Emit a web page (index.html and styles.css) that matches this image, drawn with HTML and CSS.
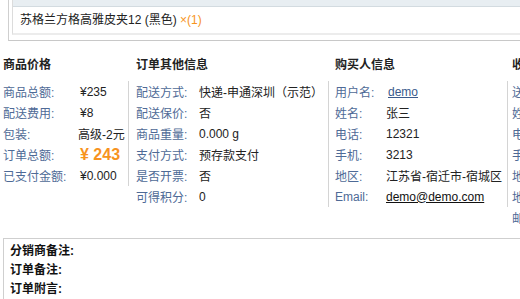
FILE: index.html
```html
<!DOCTYPE html>
<html lang="zh">
<head>
<meta charset="utf-8">
<title>订单详情</title>
<link rel="stylesheet" href="styles.css">
</head>
<body>
<div class="page">
  <div class="goods-box">
    <div class="goods-inner">
      <div class="goods-head"></div>
      <div class="goods-row">苏格兰方格高雅皮夹12 (黑色) <span class="qty">×(1)</span></div>
    </div>
  </div>

  <div class="info">
    <div class="col col-1">
      <h3 class="col-title">商品价格</h3>
      <div class="col-body">
        <div class="row"><span class="lbl">商品总额:</span><span class="val">¥235</span></div>
        <div class="row"><span class="lbl">配送费用:</span><span class="val">¥8</span></div>
        <div class="row"><span class="lbl">包装:</span><span class="val pack">高级-2元</span></div>
        <div class="row"><span class="lbl">订单总额:</span><span class="val total">¥ 243</span></div>
        <div class="row"><span class="lbl">已支付金额:</span><span class="val">¥0.000</span></div>
      </div>
    </div>
    <div class="col col-2">
      <h3 class="col-title">订单其他信息</h3>
      <div class="col-body">
        <div class="row"><span class="lbl">配送方式:</span><span class="val">快递-申通深圳（示范）</span></div>
        <div class="row"><span class="lbl">配送保价:</span><span class="val">否</span></div>
        <div class="row"><span class="lbl">商品重量:</span><span class="val">0.000 g</span></div>
        <div class="row"><span class="lbl">支付方式:</span><span class="val">预存款支付</span></div>
        <div class="row"><span class="lbl">是否开票:</span><span class="val">否</span></div>
        <div class="row"><span class="lbl">可得积分:</span><span class="val">0</span></div>
      </div>
    </div>
    <div class="col col-3">
      <h3 class="col-title">购买人信息</h3>
      <div class="col-body">
        <div class="row"><span class="lbl">用户名:</span><span class="val"><a class="user-link" href="#">demo</a></span></div>
        <div class="row"><span class="lbl">姓名:</span><span class="val">张三</span></div>
        <div class="row"><span class="lbl">电话:</span><span class="val">12321</span></div>
        <div class="row"><span class="lbl">手机:</span><span class="val">3213</span></div>
        <div class="row"><span class="lbl">地区:</span><span class="val">江苏省-宿迁市-宿城区</span></div>
        <div class="row"><span class="lbl">Email:</span><span class="val"><a class="mail-link" href="#">demo@demo.com</a></span></div>
      </div>
    </div>
    <div class="col col-4">
      <h3 class="col-title">收货人信息</h3>
      <div class="col-body">
        <div class="row"><span class="lbl">送货时间:</span><span class="val">任意日期</span></div>
        <div class="row"><span class="lbl">姓名:</span><span class="val">张三</span></div>
        <div class="row"><span class="lbl">电话:</span><span class="val">12321</span></div>
        <div class="row"><span class="lbl">手机:</span><span class="val">3213</span></div>
        <div class="row"><span class="lbl">地区:</span><span class="val">江苏省-宿迁市-宿城区</span></div>
        <div class="row"><span class="lbl">地址:</span><span class="val">宿城区</span></div>
        <div class="row"><span class="lbl">邮编:</span><span class="val">223800</span></div>
      </div>
    </div>
  </div>

  <div class="memo">
    <div class="memo-line">分销商备注:</div>
    <div class="memo-line">订单备注:</div>
    <div class="memo-line">订单附言:</div>
  </div>
</div>
</body>
</html>
```

FILE: styles.css
```css
* { box-sizing: border-box; }
html, body {
  margin: 0;
  padding: 0;
  background: #fff;
  overflow: hidden;
}
body {
  font-family: "Liberation Sans", Arial, "Noto Sans CJK SC", sans-serif;
  font-size: 12px;
  color: #222;
}
.page {
  width: 760px;
}
.goods-box {
  margin-left: 8px;
  border-left: 1px solid #cfcfcf;
  border-bottom: 1px solid #c8c8c8;
  padding: 0 0 5px 3px;
}
.goods-inner {
  border-left: 1px solid #dcdcdc;
  border-bottom: 2px solid #ececec;
}
.goods-head {
  height: 7px;
  background: #e8eef2;
  border-bottom: 1px solid #d3dbe0;
}
.goods-row {
  height: 26px;
  line-height: 26px;
  padding-left: 7px;
  color: #222;
}
.qty {
  color: #f7941d;
}
.info {
  display: flex;
  margin-top: 14px;
}
.col-title {
  margin: 0;
  height: 26px;
  line-height: 20px;
  font-size: 12px;
  font-weight: bold;
  color: #222;
}
.col-body {
  border-right: 1px solid #d4d4d4;
}
.col-1 { width: 129px; }
.col-1 .col-title { padding-left: 3px; }
.col-1 .col-body { padding-left: 3px; }
.col-1 .lbl { width: 77px; }
.col-2 { width: 200px; }
.col-2 .col-title, .col-2 .col-body { padding-left: 7px; }
.col-2 .lbl { width: 63px; }
.col-3 { width: 179px; }
.col-3 .col-title, .col-3 .col-body { padding-left: 6px; }
.col-3 .lbl { width: 51px; }
.col-4 { width: 200px; }
.col-4 .col-title, .col-4 .col-body { padding-left: 4px; }
.col-4 .col-body { border-right: none; }
.col-4 .lbl { width: 63px; }
.row {
  display: flex;
  align-items: center;
  height: 21px;
  white-space: nowrap;
}
.lbl {
  flex: none;
  color: #4e6a96;
}
.val {
  color: #222;
}
.pack {
  margin-left: -2px;
}
.total {
  color: #f7931e;
  font-weight: bold;
  font-size: 16px;
}
.user-link {
  color: #3a5a8c;
  text-decoration: underline;
  margin-left: 2px;
}
.mail-link {
  color: #111;
  text-decoration: underline;
}
.memo {
  margin-top: 10px;
  margin-left: 3px;
  border: 1px solid #cfcfcf;
  padding: 3px 6px;
}
.memo-line {
  height: 19px;
  line-height: 19px;
  font-weight: bold;
  color: #111;
}
```
